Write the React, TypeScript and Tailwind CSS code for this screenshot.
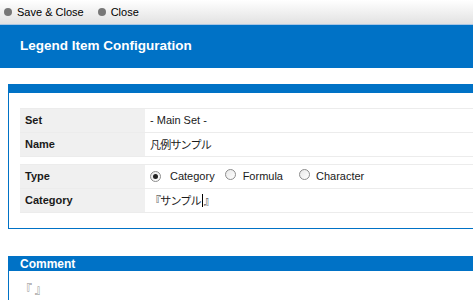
import React from "react";

const Radio = ({ checked }: { checked?: boolean }) => (
  <span className="relative inline-flex h-[11px] w-[11px] items-center justify-center rounded-full border border-[#8c8c8c] bg-gradient-to-br from-[#e8e8e8] to-white">
    {checked && <span className="h-[5px] w-[5px] rounded-full bg-[#222]" />}
  </span>
);

const Row = ({ label, children }: { label: string; children: React.ReactNode }) => (
  <div className="flex h-[24px] border-b border-[#ececec]">
    <div className="flex w-[125px] items-center bg-[#f0f0f0] pl-[5px] text-[11px] font-bold text-[#1a1a1a]">
      {label}
    </div>
    <div className="flex flex-1 items-center bg-white pl-[5px] text-[11px] text-[#1a1a1a]">{children}</div>
  </div>
);

export default function App() {
  return (
    <div className="h-[300px] w-[473px] overflow-hidden bg-white font-['Liberation_Sans',Arial,'Noto_Sans_CJK_JP',sans-serif]">
      {/* toolbar */}
      <div className="flex h-[25px] items-center border-b border-[#a9c6e4] bg-gradient-to-b from-white to-[#e2e2e2] text-[11px] text-black">
        <span className="ml-[4px] h-[8px] w-[8px] rounded-full bg-[#777]" />
        <span className="ml-[5px]">Save &amp; Close</span>
        <span className="ml-[14px] h-[8px] w-[8px] rounded-full bg-[#777]" />
        <span className="ml-[5px]">Close</span>
      </div>
      {/* header */}
      <div className="flex h-[43px] items-center bg-[#0072c6] pl-[20px] text-[13.5px] font-bold text-white">
        Legend Item Configuration
      </div>
      {/* panel */}
      <div className="ml-[8px] mt-[16px] w-[520px] border-b border-l border-[#0072c6]">
        <div className="h-[9px] bg-[#0072c6]" />
        <div className="pb-[15px] pl-[11px] pt-[15px]">
          <div className="border-t border-[#ececec]">
            <Row label="Set">- Main Set -</Row>
            <Row label="Name">
              <span className="font-['Noto_Sans_CJK_JP',sans-serif] text-[11px] tracking-[-0.8px]">凡例サンプル</span>
            </Row>
          </div>
          <div className="mt-[7px] border-t border-[#ececec]">
            <Row label="Type">
              <span className="flex items-center">
                <Radio checked />
                <span className="ml-[9px]">Category</span>
                <span className="ml-[10px]"><Radio /></span>
                <span className="ml-[7px]">Formula</span>
                <span className="ml-[16px]"><Radio /></span>
                <span className="ml-[6px]">Character</span>
              </span>
            </Row>
            <Row label="Category">
              <span className="flex items-center font-['Noto_Sans_CJK_JP',sans-serif] text-[11px] tracking-[-0.8px]">
                『サンプル
                <span className="mx-px inline-block h-[13px] w-px bg-black" />
                』
              </span>
            </Row>
          </div>
        </div>
      </div>
      {/* comment */}
      <div className="ml-[8px] mt-[27px] h-[60px] w-[520px] border-l border-[#0072c6]">
        <div className="flex h-[15px] items-center bg-[#0072c6] pl-[11px] text-[12px] font-bold text-white">
          Comment
        </div>
        <div className="pl-[11px] pt-[9px] font-['Noto_Sans_CJK_JP',sans-serif] text-[12px] text-[#8a8a8a]">
          『 』
        </div>
      </div>
    </div>
  );
}
